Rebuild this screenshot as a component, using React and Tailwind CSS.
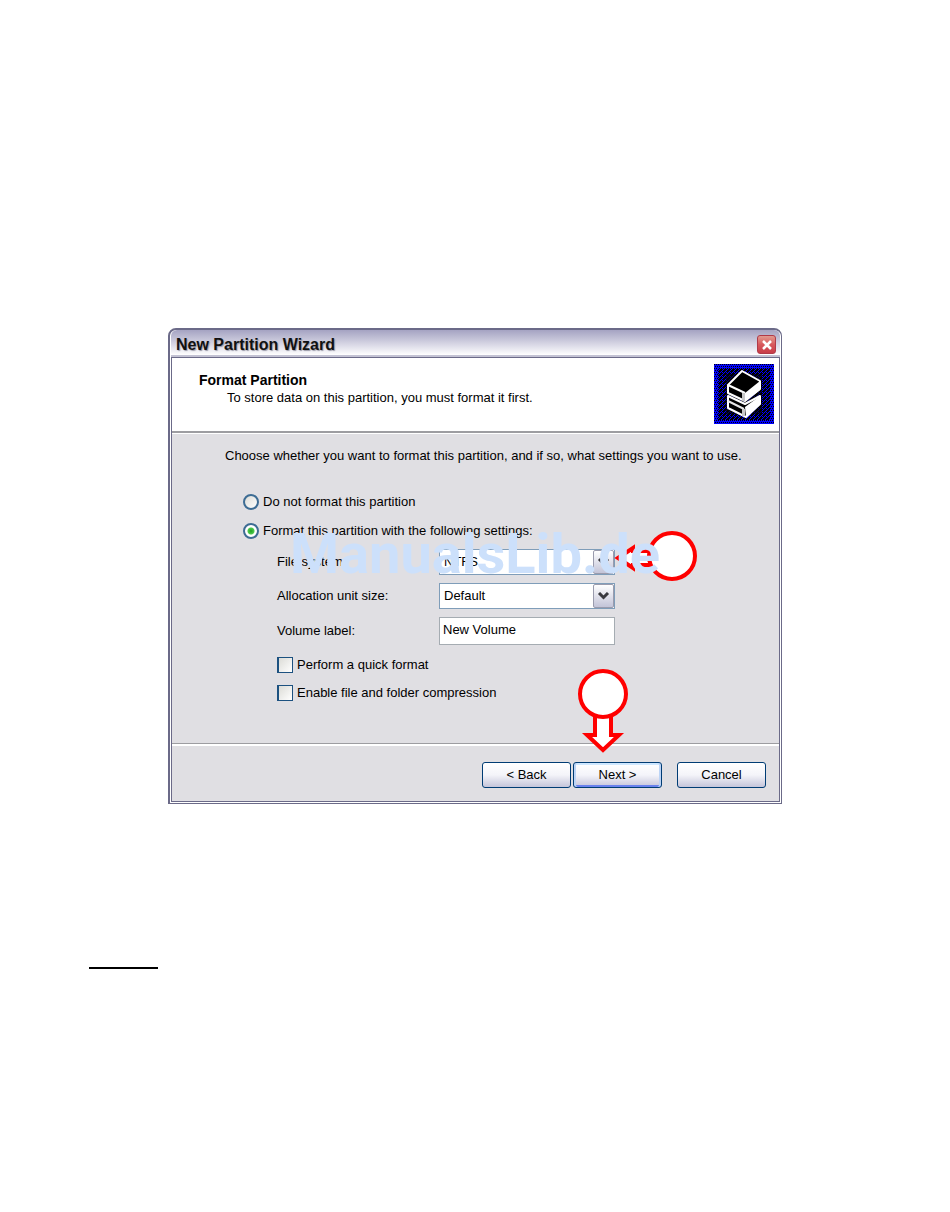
import React, { useState } from 'react';

const wizardFont = "font-['Liberation_Sans',Arial,sans-serif]";

const BooksLogo = () => (
  <svg width="60" height="60" viewBox="0 0 60 60" className="shrink-0" aria-hidden="true">
    <defs>
      <pattern id="dither" width="4" height="4" patternUnits="userSpaceOnUse">
        <rect width="4" height="4" fill="#0000ff" />
        <path d="M0 0h1v1H0zM2 0h1v1H2zM1 2h1v1H1zM3 2h1v1H3z" fill="#000" />
      </pattern>
      <pattern id="ditherGrid" width="4" height="4" patternUnits="userSpaceOnUse">
        <rect width="4" height="4" fill="#000" />
        <path d="M0 0h1v1H0zM2 0h1v1H2zM1 1h1v1H1zM0 2h1v1H0zM3 3h1v1H3z" fill="#0000ff" />
      </pattern>
    </defs>
    <rect width="60" height="60" fill="url(#dither)" />
    <rect x="4" y="4" width="52" height="52" fill="url(#ditherGrid)" />
    <rect x="12" y="10" width="36" height="40" fill="#000" fillOpacity="0.6" />
    <path d="M14 32l17 8 15-8v8L32 53l-18-9z" fill="#000" stroke="#fff" strokeWidth="2" strokeLinejoin="round" />
    <path d="M31 43l15-11v8L32 53z" fill="#fff" />
    <path d="M14 37l16 8" stroke="#e8e8e8" strokeWidth="2" />
    <path d="M28 7l18 10v8L31 37l-17-8v-8z" fill="#000" stroke="#fff" strokeWidth="2" strokeLinejoin="round" />
    <path d="M31 29l15-12v9L31 37z" fill="#fff" />
    <path d="M14 21l17 8" stroke="#fff" strokeWidth="2" />
    <path d="M28 29h3v8h-3zM28 45h3v7h-3z" fill="#c8c8c8" />
  </svg>
);

const SelectBox = ({ id, value }) => (
  <div className="relative w-44">
    <select
      id={id}
      defaultValue={value}
      className="block h-[26px] w-full appearance-none border border-[#7f9db9] bg-white pl-1 text-[13px] text-black outline-none"
    >
      <option>{value}</option>
    </select>
    <span className="pointer-events-none absolute top-px right-px flex h-6 w-[21px] items-center justify-center rounded-[2px] border border-[#9a9bad] bg-linear-to-b from-white to-[#c3c4d8]">
      <svg width="13" height="9" viewBox="0 0 13 9" fill="none" aria-hidden="true">
        <path d="M2 1l4.500 4.500L11 1" stroke="#39393f" strokeWidth="3" />
      </svg>
    </span>
  </div>
);

const Radio = ({ label, checked, onChange }) => (
  <label className="flex items-center gap-1">
    <input
      type="radio"
      name="format"
      checked={checked}
      onChange={onChange}
      className="size-4 appearance-none rounded-full border-2 border-[#3d6c94] bg-linear-to-br from-[#dcdcd7] to-white checked:bg-[radial-gradient(circle,#21a121_0,#4cc84c_3px,#ffffff_4px)]"
    />
    {label}
  </label>
);

const Checkbox = ({ label }) => (
  <label className="flex items-center gap-1">
    <input
      type="checkbox"
      className="size-4 appearance-none border border-l-2 border-[#1c5180] bg-linear-to-br from-[#dcdcd7] to-white checked:bg-[#21a121]"
    />
    {label}
  </label>
);

const WizardButton = ({ children, focused }) => (
  <button
    type="button"
    className={`h-[26px] w-[89px] rounded-[3px] border border-[#003c74] text-[13px] ${
      focused
        ? 'bg-linear-to-b from-white via-[#f4f4fa] to-[#c5c5da] shadow-[inset_2px_0_0_#bcd4f6,inset_-2px_0_0_#bcd4f6,inset_0_2px_0_#cee7ff,inset_0_-2px_0_#6982ee]'
        : 'bg-linear-to-b from-white via-[#f4f4f9] to-[#c5c5da]'
    }`}
  >
    {children}
  </button>
);

// Red pointers and the site mark that lie over the dialog
const Annotations = () => (
  <>
    <svg className="pointer-events-none absolute top-[200px] left-[444px]" width="86" height="56" viewBox="0 0 86 56" aria-hidden="true">
      <path d="M4 28L19 18v3h22v14H19v3z" fill="#fff" stroke="#f00" strokeWidth="4" />
      <circle cx="58" cy="26" r="23" fill="#fff" stroke="#f00" strokeWidth="4" />
    </svg>
    <svg className="pointer-events-none absolute top-[338px] left-[405px]" width="56" height="86" viewBox="0 0 56 86" aria-hidden="true">
      <path d="M20 46h16v21h8L28 82 12 67h8z" fill="#fff" stroke="#f00" strokeWidth="4" />
      <circle cx="28" cy="26" r="23" fill="#fff" stroke="#f00" strokeWidth="4" />
    </svg>
    <span className="pointer-events-none absolute top-[192px] left-[120px] font-[Roboto,sans-serif] text-[56px] leading-[64px] font-bold text-[#cce0fb]">
      ManualsLib.de
    </span>
  </>
);

const App = () => {
  const [format, setFormat] = useState(true);

  return (
    <main className={`min-h-screen bg-white pt-82 pb-60 text-[13px] leading-4 text-black ${wizardFont}`}>
      <section className="relative mx-auto max-w-[614px] rounded-t-lg border-t-2 border-r border-b border-l-2 border-[#6b6a88] bg-white px-px pb-px">
        {/* Title bar */}
        <header className="flex h-[27px] items-center justify-between rounded-t-md border-b-2 border-[#c3c2d3] bg-linear-to-b from-[#a5a3c2] to-white pt-1 pr-1 pl-[5px]">
          <h1 className="text-base font-bold text-[#111] [text-shadow:1px_1px_1px_#9a9aa8]">New Partition Wizard</h1>
          <button
            type="button"
            aria-label="Close"
            className="flex size-[19px] items-center justify-center rounded-[3px] border border-[#b03a48] bg-linear-to-b from-[#e09a90] via-[#d8585c] to-[#c83c48]"
          >
            <svg width="10" height="10" viewBox="0 0 10 10" aria-hidden="true">
              <path d="M1 1l8 8M9 1L1 9" stroke="#fff" strokeWidth="2.500" />
            </svg>
          </button>
        </header>

        <div className="border border-[#6b6a88] bg-[#e0dfe3]">
          {/* Page heading */}
          <div className="flex h-[75px] justify-between border-b-2 border-[#9d9da1] bg-white pt-[6px] pr-[5px] pl-[27px]">
            <div className="pt-2">
              <h2 className="text-sm leading-4 font-bold">Format Partition</h2>
              <p className="mt-[2px] pl-7">To store data on this partition, you must format it first.</p>
            </div>
            <BooksLogo />
          </div>

          <form className="border-t border-white" onSubmit={(e) => e.preventDefault()}>
            <div className="h-[309px] pt-[14px] pl-[53px]">
              <p>Choose whether you want to format this partition, and if so, what settings you want to use.</p>

              <div className="mt-[30px] flex flex-col gap-[13px] pl-[18px]">
                <Radio label="Do not format this partition" checked={!format} onChange={() => setFormat(false)} />
                <Radio label="Format this partition with the following settings:" checked={format} onChange={() => setFormat(true)} />
              </div>

              <div className="mt-[10px] grid grid-cols-[162px_176px] items-center gap-y-2 pl-[52px]">
                <label htmlFor="fs">File system:</label>
                <SelectBox id="fs" value="NTFS" />
                <label htmlFor="unit">Allocation unit size:</label>
                <SelectBox id="unit" value="Default" />
                <label htmlFor="volume">Volume label:</label>
                <input
                  id="volume"
                  defaultValue="New Volume"
                  className="h-7 w-44 border border-[#a5acb2] bg-white pb-1 pl-[3px] outline-none"
                />
              </div>

              <div className="mt-3 flex flex-col gap-3 pl-[52px]">
                <Checkbox label="Perform a quick format" />
                <Checkbox label="Enable file and folder compression" />
              </div>
            </div>

            <footer className="border-t border-[#9d9da1]">
              <div className="flex h-[57px] justify-end gap-[2px] border-t-2 border-white pt-4 pr-[13px]">
                <WizardButton>&lt; Back</WizardButton>
                <WizardButton focused>Next &gt;</WizardButton>
                <div className="pl-[13px]">
                  <WizardButton>Cancel</WizardButton>
                </div>
              </div>
            </footer>
          </form>
        </div>

        <Annotations />
      </section>

      <hr className="mt-[163px] ml-[89px] w-[69px] border-t-2 border-black" />
    </main>
  );
};

export default App;
